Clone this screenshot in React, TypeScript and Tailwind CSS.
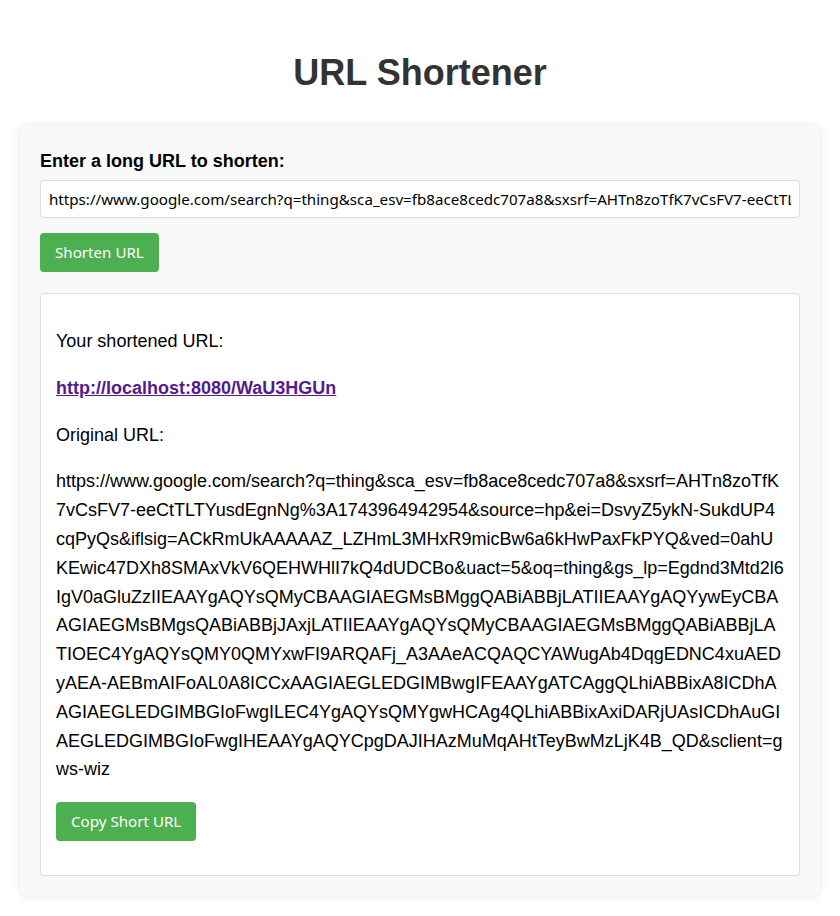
import React from "react";

const LONG_URL =
  "https://www.google.com/search?q=thing&sca_esv=fb8ace8cedc707a8&sxsrf=AHTn8zoTfK7vCsFV7-eeCtTLTYusdEgnNg%3A1743964942954&source=hp&ei=DsvyZ5ykN-SukdUP4cqPyQs&iflsig=ACkRmUkAAAAAZ_LZHmL3MHxR9micBw6a6kHwPaxFkPYQ&ved=0ahUKEwic47DXh8SMAxVkV6QEHWHlI7kQ4dUDCBo&uact=5&oq=thing&gs_lp=Egdnd3Mtd2l6IgV0aGluZzIIEAAYgAQYsQMyCBAAGIAEGMsBMggQABiABBjLATIIEAAYgAQYywEyCBAAGIAEGMsBMgsQABiABBjJAxjLATIIEAAYgAQYsQMyCBAAGIAEGMsBMggQABiABBjLATIOEC4YgAQYsQMY0QMYxwFI9ARQAFj_A3AAeACQAQCYAWugAb4DqgEDNC4xuAEDyAEA-AEBmAIFoAL0A8ICCxAAGIAEGLEDGIMBwgIFEAAYgATCAggQLhiABBixA8ICDhAAGIAEGLEDGIMBGIoFwgILEC4YgAQYsQMYgwHCAg4QLhiABBixAxiDARjUAsICDhAuGIAEGLEDGIMBGIoFwgIHEAAYgAQYCpgDAJIHAzMuMqAHtTeyBwMzLjK4B_QD&sclient=gws-wiz";

export default function App() {
  return (
    <div className="min-h-screen bg-white font-['Liberation_Sans',Arial,sans-serif] text-black">
      <h1 className="pt-[52px] text-center text-[36px] font-bold leading-[41px] text-[#333]">
        URL Shortener
      </h1>
      <div className="mx-[20px] mt-[33px] rounded-lg bg-[#f9f9f9] p-[20px] shadow-[0_0_10px_rgba(0,0,0,0.1)]">
        <label className="mt-[5px] mb-[9px] block text-[18px] font-bold leading-[20px]">
          Enter a long URL to shorten:
        </label>
        <input
          type="text"
          readOnly
          value={LONG_URL}
          className="block h-[38px] w-full rounded border border-[#ddd] bg-white px-[8px] font-['Noto_Sans',sans-serif] text-[15.15px] text-black outline-none"
        />
        <button className="mt-[15px] block h-[39px] rounded bg-[#4CAF50] px-[15px] font-['Noto_Sans',sans-serif] text-[15.15px] text-white">
          Shorten URL
        </button>
        <div className="mt-[21px] rounded border border-[#ddd] bg-white px-[15px] pt-[15px] pb-[15px] text-[18px] leading-[1.6]">
          <p className="my-[18px]">Your shortened URL:</p>
          <p className="my-[18px]">
            <a href="#" className="font-bold text-[#551a8b] underline">
              http://localhost:8080/WaU3HGUn
            </a>
          </p>
          <p className="my-[18px]">Original URL:</p>
          <p className="my-[18px] break-all">{LONG_URL}</p>
          <button className="mb-[19px] block h-[39px] rounded bg-[#4CAF50] px-[15px] font-['Noto_Sans',sans-serif] text-[15.15px] leading-normal text-white">
            Copy Short URL
          </button>
        </div>
      </div>
    </div>
  );
}
